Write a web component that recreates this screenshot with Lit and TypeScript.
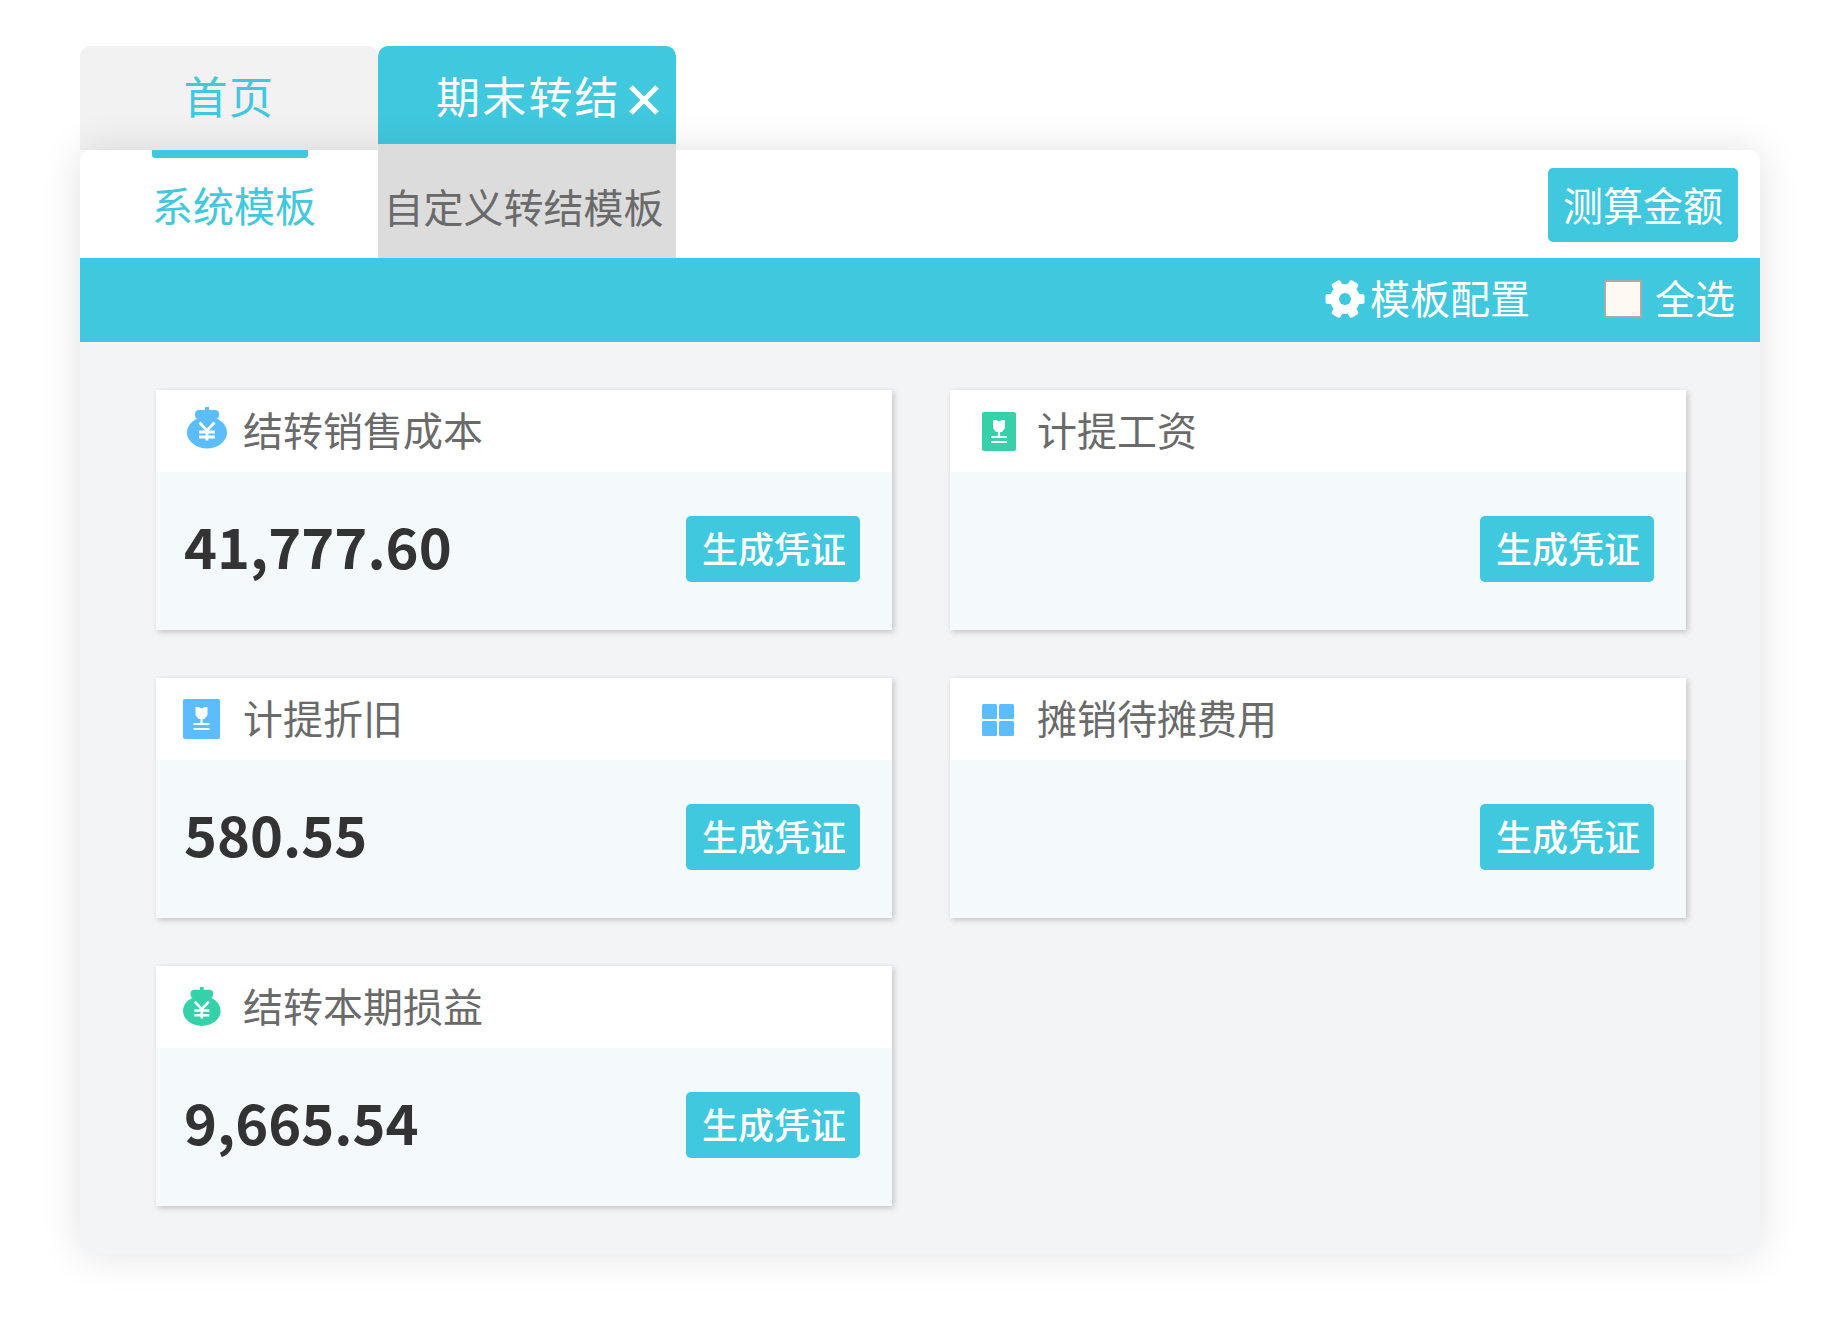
import { LitElement, html, css, svg } from 'lit'
import { customElement } from 'lit/decorators.js'

const BLUE = '#5cbdfd'
const GREEN = '#35d2a9'

// icons are drawn in the coordinates of the 87x82 slot left of each card title
const bag = (x: number, y: number, s: number, color: string) => svg`
	<g transform="translate(${x} ${y}) scale(${s})" fill=${color}>
		<rect x="18" y="0" width="4" height="5" />
		<rect x="8" y="3" width="24" height="9" rx="4" />
		<ellipse cx="20" cy="25.500" rx="20" ry="16" />
		<path d="M12.500 15.500l7.500 8 7.500-8M20 23.500v10M12 25h16M12 30h16" fill="none" stroke="#fff" stroke-width="2.800" />
	</g>`

const book = (x: number, y: number, w: number, h: number, color: string) => {
	const c = w / 2
	return svg`
		<g transform="translate(${x} ${y})">
			<rect width=${w} height=${h} rx="2" fill=${color} />
			<path d=${`M${c - 6} 8h3l3 1.500 3-1.500h3v8l-3 4h-6l-3-4z`} fill="#fff" />
			<path d=${`M${c} 18v7M${c - 8} 25h16M${c - 8} 30h16`} fill="none" stroke="#fff" stroke-width="2.200" />
		</g>`
}

const ICONS: Record<string, unknown> = {
	bagBlue: bag(31, 17, 1, BLUE),
	bagGreen: bag(27, 21, 0.94, GREEN),
	bookGreen: book(32, 22, 34, 39, GREEN),
	bookBlue: book(27, 21, 37, 40, BLUE),
	grid: svg`
		<g fill=${BLUE}>
			<rect x="32" y="26" width="15" height="15" rx="1.500" />
			<rect x="49" y="26" width="15" height="15" rx="1.500" />
			<rect x="32" y="43" width="15" height="15" rx="1.500" />
			<rect x="49" y="43" width="15" height="15" rx="1.500" />
		</g>`,
}

const CARDS = [
	{ title: '结转销售成本', icon: 'bagBlue', amount: '41,777.60' },
	{ title: '计提工资', icon: 'bookGreen', amount: '' },
	{ title: '计提折旧', icon: 'bookBlue', amount: '580.55' },
	{ title: '摊销待摊费用', icon: 'grid', amount: '' },
	{ title: '结转本期损益', icon: 'bagGreen', amount: '9,665.54' },
]

const GEAR_ANGLES = [0, 60, 120, 180, 240, 300]

@customElement('app-root')
export class AppRoot extends LitElement {
	static styles = css`
		:host {
			display: block;
			box-sizing: border-box;
			height: 1320px;
			padding: 46px 80px 0;
			background: #fff;
			font-family: 'Noto Sans CJK SC', 'Noto Sans', sans-serif;
			color: #6a6a6a;
		}

		.tabs {
			display: flex;
			align-items: flex-start;
			height: 104px;
		}
		.tab {
			box-sizing: border-box;
			display: flex;
			align-items: center;
			width: 298px;
			border-radius: 10px 10px 0 0;
			font-size: 44px;
			line-height: 1;
		}
		.tab.home {
			height: 104px;
			justify-content: center;
			padding-bottom: 6px;
			background: #f2f2f2;
			color: #40c8de;
			letter-spacing: 1.500px;
		}
		.tab.active {
			height: 98px;
			padding-left: 58px;
			background: #40c8de;
			color: #fff;
			letter-spacing: 2.200px;
		}
		.tab.active svg {
			margin: 10px 0 0 7px;
		}

		.window {
			position: relative;
			height: 1104px;
			border-radius: 10px;
			background: #f3f4f6;
			box-shadow: 0 0 40px rgba(0, 0, 0, 0.12);
		}
		.sub {
			display: flex;
			align-items: flex-start;
			height: 108px;
			border-radius: 10px 10px 0 0;
			background: #fff;
		}
		.sub-tab {
			box-sizing: border-box;
			display: flex;
			align-items: center;
			justify-content: center;
			width: 298px;
			height: 108px;
			font-size: 40px;
			line-height: 1;
		}
		.sub-tab.on {
			position: relative;
			padding-left: 10px;
			color: #40c8de;
			font-size: 41px;
		}
		.sub-tab.on::before {
			content: '';
			position: absolute;
			left: 72px;
			top: 0;
			width: 156px;
			height: 8px;
			border-radius: 0 0 3px 3px;
			background: #40c8de;
		}
		.sub-tab.off {
			position: relative;
			height: 114px;
			margin-top: -6px;
			padding: 9px 7px 0 0;
			background: #dcdcdc;
		}
		.measure {
			box-sizing: border-box;
			display: flex;
			align-items: center;
			justify-content: center;
			width: 190px;
			height: 74px;
			margin: 18px 22px 0 auto;
			padding-bottom: 2px;
			border-radius: 5px;
			background: #40c8de;
			color: #fff;
			font-size: 40px;
			line-height: 1;
		}

		.bar {
			box-sizing: border-box;
			display: flex;
			align-items: center;
			justify-content: flex-end;
			height: 84px;
			padding: 0 25px 2px 0;
			background: #40c8de;
			color: #fff;
			font-size: 40px;
			line-height: 1;
		}
		.bar span {
			margin-bottom: 5px;
		}
		.gear {
			margin-right: 5px;
		}
		.check {
			box-sizing: border-box;
			width: 38px;
			height: 38px;
			margin: 0 13px 0 74px;
			border: 2px solid #aaa;
			background: #fff8f3;
		}

		.grid {
			display: grid;
			grid-template-columns: 736px 736px;
			grid-auto-rows: 240px;
			gap: 48px 58px;
			padding: 48px 0 0 76px;
		}
		.card {
			display: flex;
			flex-direction: column;
			background: #f4f9fc;
			box-shadow: 2px 2px 6px rgba(0, 0, 0, 0.2);
		}
		.head {
			display: flex;
			align-items: center;
			height: 82px;
			background: #fff;
			font-size: 40px;
			line-height: 1;
		}
		.head svg {
			flex: none;
		}
		.head span {
			margin-bottom: 5px;
		}
		.body {
			flex: 1;
			display: flex;
			align-items: center;
			justify-content: space-between;
			padding: 0 32px 4px 28px;
		}
		.amount {
			margin-bottom: 9px;
			color: #333;
			font-size: 56px;
			font-weight: 700;
			line-height: 1;
		}
		.make {
			box-sizing: border-box;
			display: flex;
			align-items: center;
			justify-content: center;
			width: 174px;
			height: 66px;
			margin-left: auto;
			padding: 0 0 4px 2px;
			border-radius: 5px;
			background: #40c8de;
			color: #fff;
			font-size: 36px;
			font-weight: 500;
			line-height: 1;
		}
	`

	render() {
		return html`
			<div class="tabs">
				<div class="tab home">首页</div>
				<div class="tab active">
					期末转结
					<svg width="32" height="32" viewBox="0 0 32 32">
						<path d="M3 3l26 26M29 3L3 29" stroke="#fff" stroke-width="5" fill="none" />
					</svg>
				</div>
			</div>
			<div class="window">
				<div class="sub">
					<div class="sub-tab on">系统模板</div>
					<div class="sub-tab off">自定义转结模板</div>
					<div class="measure">测算金额</div>
				</div>
				<div class="bar">
					<svg class="gear" width="40" height="40" viewBox="0 0 40 40">
						<g fill="#fff">
							<circle cx="20" cy="20" r="15" />
							${GEAR_ANGLES.map(
								(a) => svg`<rect x="15" y="0.500" width="10" height="12" rx="2" transform="rotate(${a + 30} 20 20)" />`,
							)}
						</g>
						<circle cx="20" cy="20" r="6" fill="#40c8de" />
					</svg>
					<span>模板配置</span>
					<div class="check"></div>
					<span>全选</span>
				</div>
				<div class="grid">
					${CARDS.map(
						(c) => html`
							<div class="card">
								<div class="head">
									<svg width="87" height="82" viewBox="0 0 87 82">${ICONS[c.icon]}</svg>
									<span>${c.title}</span>
								</div>
								<div class="body">
									${c.amount ? html`<div class="amount">${c.amount}</div>` : ''}
									<div class="make">生成凭证</div>
								</div>
							</div>
						`,
					)}
				</div>
			</div>
		`
	}
}
